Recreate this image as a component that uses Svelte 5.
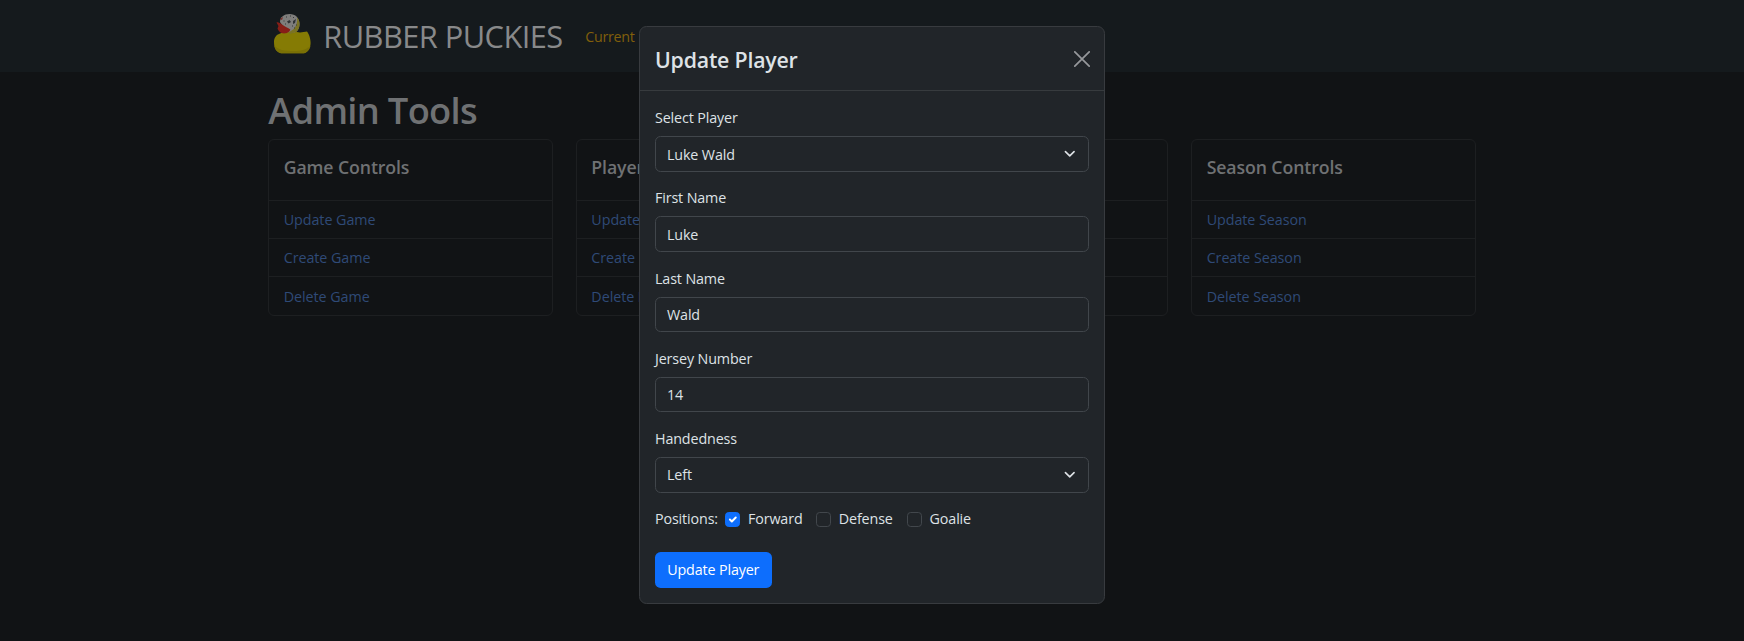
<script lang="ts">
  const cards = ['Game', 'Player', '', 'Season'];
  const actions = ['Update', 'Create', 'Delete'];
  const fields = [
    { label: 'Select Player', value: 'Luke Wald', select: true },
    { label: 'First Name', value: 'Luke', select: false },
    { label: 'Last Name', value: 'Wald', select: false },
    { label: 'Jersey Number', value: '14', select: false },
    { label: 'Handedness', value: 'Left', select: true }
  ];
  const positions = [
    { name: 'Forward', on: true },
    { name: 'Defense', on: false },
    { name: 'Goalie', on: false }
  ];
</script>

<div class="page">
  <nav class="navbar">
    <div class="container nav-inner">
      <svg class="logo" viewBox="0 0 48 48" aria-hidden="true">
        <path d="M6 30C6 26 8 23 11 22C14 20.500 17 20 20 20L29 20C32 21 36 20 39 19.600C41 22 42.600 27 42.600 31C42.600 36 40 40 36 41.300H13C8 40 6 36 6 30Z" fill="#857b04" />
        <path d="M6.300 33C9 38 17 39 26 39C34 39 39 37 42.400 34C42 37 39.500 40.500 36 41.300H13C9 40 6.500 37 6.300 33Z" fill="#7a7005" />
        <path d="M12 10C12 5 16 2 21.500 2C27.500 2 31.500 6 31.500 12C31.500 17 29 20.500 24 21L19 20Z" fill="#7f7e7c" />
        <path d="M29 5.500C32.500 9 32.500 16 28.500 20L22 22L20 20C26 19 30 13 29 5.500Z" fill="#7b7323" />
        <path d="M8.500 10.500C10 9.800 12 11 14 12.500C17 14.500 20 16 22.300 17.500C22 20 18 22 14.500 21.300C11.500 20.500 10 18 9.500 16.500L10.500 14Z" fill="#871e17" />
        <path d="M12 7l3-2-1 3z" fill="#7d2b26" />
        <path d="M19 9.500l2.500-1.500 1.500 2-2.500 1.500zM25 9l3-2-1 4-2 1z" fill="#303335" />
        <path d="M18 5h1M22 4h1M25 5.500h1M15.500 9h1M17 12h1M24 14h1M26 16h1M28 13h1" stroke="#35383a" stroke-width="1.2" />
      </svg>
      <span class="brand">RUBBER PUCKIES</span>
      <span class="nav-link">Current</span>
    </div>
  </nav>

  <main class="container">
    <h1>Admin Tools</h1>
    <div class="cards">
      {#each cards as card}
        <section class="card">
          <h5>{#if card}{card}{card === 'Player' ? '' : ' Controls'}{/if}</h5>
          {#each actions as action}
            <div class="row">
              {#if card}<a href="#top">{action}{card === 'Player' && action === 'Update' ? '' : ` ${card}`}</a>{/if}
            </div>
          {/each}
        </section>
      {/each}
    </div>
  </main>

  <div class="overlay">
    <div class="modal" role="dialog">
      <header>
        <h4>Update Player</h4>
        <svg class="close" viewBox="0 0 16 16"><path d="M.8.8 15.2 15.2M15.2.8.8 15.2" fill="none" stroke="#96989b" stroke-width="1.7" stroke-linecap="round" /></svg>
      </header>
      <div class="body">
        {#each fields as f}
          <div class="field">
            <div class="label">{f.label}</div>
            <div class="control">
              <span>{f.value}</span>
              {#if f.select}
                <svg class="chevron" viewBox="0 0 16 16"><path d="m2 5 6 6 6-6" fill="none" stroke="#dee2e6" stroke-width="2.2" stroke-linecap="round" stroke-linejoin="round" /></svg>
              {/if}
            </div>
          </div>
        {/each}
        <div class="positions">
          <span class="lead">Positions:</span>
          {#each positions as p}
            <span class="check">
              <span class="box" class:on={p.on}>
                {#if p.on}
                  <svg viewBox="0 0 20 20"><path d="m6 10 3 3 6-6" fill="none" stroke="#fff" stroke-width="3" stroke-linecap="round" stroke-linejoin="round" /></svg>
                {/if}
              </span>
              <span>{p.name}</span>
            </span>
          {/each}
        </div>
        <button type="button">Update Player</button>
      </div>
    </div>
  </div>
</div>

<style>
  :global(body) { background: #111315; }
  .page {
    position: relative;
    height: 641px;
    overflow: hidden;
    background: #111315;
    font-family: 'Open Sans', 'Noto Sans', sans-serif;
    font-size: 14.3px;
    line-height: 22.4px;
    letter-spacing: -0.13px;
  }
  .page :is(*, *::before) { box-sizing: border-box; }
  .container { width: 1207.6px; margin: 0 auto; }
  .navbar { height: 71.6px; background: #151a1d; }
  .nav-inner { display: flex; align-items: center; height: 100%; }
  .logo { width: 48px; height: 48px; flex: none; }
  .brand { width: 262px; margin: 1px 0 0 7px; font-size: 30.8px; line-height: 45px; color: #88898a; white-space: nowrap; letter-spacing: -0.55px; }
  .nav-link { color: #815f0b; margin-top: 2px; letter-spacing: -0.3px; }
  h1 { margin: 16px 0 6.9px; font-size: 36.3px; line-height: 44.7px; font-weight: 600; color: #6f7173; letter-spacing: -0.7px; }
  .cards { display: grid; grid-template-columns: repeat(4, 1fr); gap: 23px; }
  .card { border: 1px solid #1d1f21; border-radius: 6px; }
  h5 { margin: 0; height: 59.6px; padding: 14.8px 14.5px 0; font-size: 17.7px; line-height: 24px; font-weight: 600; color: #6f7173; letter-spacing: -0.1px; }
  .row { height: 38.3px; padding: 8.2px 14.5px 0; border-top: 1px solid #1d1f21; letter-spacing: -0.05px; }
  a { color: #2f4a77; text-decoration: none; }
  .overlay { position: absolute; inset: 0; display: flex; justify-content: center; align-items: flex-start; padding-top: 26px; }
  .modal { width: 466px; height: 577.5px; border: 1px solid #383b3f; border-radius: 7.5px; background: #212529; color: #dee2e6; }
  header { display: flex; justify-content: space-between; align-items: flex-start; height: 64.3px; padding: 15px 14.5px 15px 15px; border-bottom: 1px solid #373b3e; }
  h4 { margin: 2px 0 0; font-size: 21.3px; line-height: 32px; font-weight: 600; letter-spacing: -0.2px; }
  .close { width: 16px; height: 16px; margin: 8.5px 0 0; }
  .body { padding: 15px; }
  .field { height: 80.2px; }
  .label { height: 30px; line-height: 23px; }
  .control { display: flex; justify-content: space-between; align-items: center; height: 35.6px; padding: 1.6px 13px 0 11px; border: 1px solid #41464b; border-radius: 5.6px; }
  .chevron { width: 11.5px; height: 11.5px; margin-top: -1.6px; }
  .positions { display: flex; align-items: center; height: 22.4px; margin-top: 0.6px; }
  .lead { width: 70.3px; }
  .check { display: flex; align-items: center; gap: 7.7px; width: 90.8px; }
  .box { width: 15px; height: 15px; border: 1px solid #42474c; border-radius: 3.7px; }
  .box.on { border-color: #0d6efd; background: #0d6efd; }
  .box svg { display: block; width: 13px; height: 13px; }
  button { display: block; width: 116.5px; height: 35.6px; margin-top: 22px; padding: 1px 0 0; border: 0; border-radius: 5.6px; background: #0d6efd; color: #fff; font: inherit; letter-spacing: -0.13px; }
</style>
